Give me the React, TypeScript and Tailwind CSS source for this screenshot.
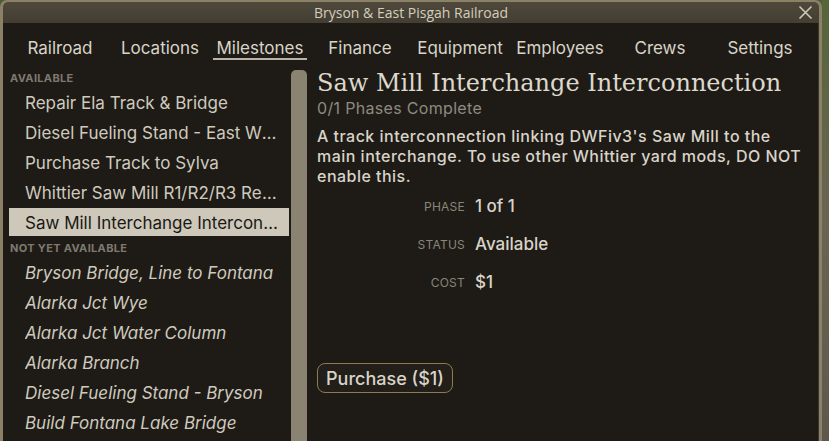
import React from 'react';

const tabs = ['Railroad', 'Locations', 'Milestones', 'Finance', 'Equipment', 'Employees', 'Crews', 'Settings'];

const available = [
    'Repair Ela Track & Bridge',
    'Diesel Fueling Stand - East Whittier',
    'Purchase Track to Sylva',
    'Whittier Saw Mill R1/R2/R3 Realignment',
    'Saw Mill Interchange Interconnection',
];

const notYet = [
    'Bryson Bridge, Line to Fontana',
    'Alarka Jct Wye',
    'Alarka Jct Water Column',
    'Alarka Branch',
    'Diesel Fueling Stand - Bryson',
    'Build Fontana Lake Bridge',
    'Fontana Branch',
];

const sans = "font-['Inter',sans-serif]";

function SectionHeader({ label }: { label: string }) {
    return (
        <div className="h-[20px] shrink-0 flex items-center pl-[1px] text-[11px] font-bold tracking-[0.03em] text-[#7e796f] uppercase">
            {label}
        </div>
    );
}

function Field({ label, value }: { label: string; value: string }) {
    return (
        <div className="h-[38px] flex items-center">
            <div className="w-[148px] text-right text-[12px] text-[#8a857a] uppercase tracking-[0.02em]">{label}</div>
            <div className="ml-[10px] text-[17px] font-medium text-[#d9d4c7]">{value}</div>
        </div>
    );
}

export default function App() {
    return (
        <div className={`w-[829px] h-[441px] flex items-start overflow-hidden bg-[#4f5a3a] ${sans}`}>
            {/* window */}
            <div className="w-[822px] h-[441px] shrink-0 flex flex-col bg-[#8b8166] rounded-t-[7px] pt-[2px] pl-[3px] pr-[3px] overflow-hidden">
                <div className="h-[21px] shrink-0 flex items-center relative bg-gradient-to-b from-[#4f493b] to-[#433e32] rounded-t-[5px]">
                    <div className="flex-1 text-center text-[14px] leading-[20px] text-[#d3cebf] font-['Open_Sans',sans-serif]">
                        Bryson &amp; East Pisgah Railroad
                    </div>
                    <svg className="absolute right-[6px] top-[3px]" width="15" height="15" viewBox="0 0 15 15">
                        <path d="M1.5 1.5 L13.5 13.5 M13.5 1.5 L1.5 13.5" stroke="#cfc8b4" strokeWidth="1.6" />
                    </svg>
                </div>

                <div className="flex-1 min-h-0 overflow-hidden bg-[#1e1b17] border-r border-[#3a352b] flex flex-col">
                    {/* tabs */}
                    <div className="h-[45px] shrink-0 flex pl-[7px] pt-[15px]">
                        {tabs.map((t) => (
                            <div key={t} className="w-[100px] flex flex-col items-center">
                                <div className="h-[22px] flex items-center text-[17px] text-[#d9d4c7]">{t}</div>
                                {t === 'Milestones' && <div className="mt-[-2px] w-[94px] h-[2px] bg-[#b9b3a6]" />}
                            </div>
                        ))}
                    </div>

                    <div className="flex-1 min-h-0 flex pl-[6px]">
                        {/* sidebar */}
                        <div className="w-[280px] shrink-0 flex flex-col">
                            <SectionHeader label="Available" />
                            {available.map((m, i) => {
                                const sel = i === available.length - 1;
                                return (
                                    <div
                                        key={m}
                                        className={`h-[28px] shrink-0 mb-[2px] flex items-center pt-[3px] pl-[16px] pr-[4px] text-[17px] ${sel ? 'bg-[#cdc8ba] text-[#1b1814]' : 'text-[#cfcabd]'}`}
                                    >
                                        <span className="truncate">{m}</span>
                                    </div>
                                );
                            })}
                            <SectionHeader label="Not yet available" />
                            {notYet.map((m) => (
                                <div key={m} className="h-[28px] shrink-0 mb-[2px] flex items-center pt-[3px] pl-[16px] pr-[4px] text-[17px] italic text-[#cfcabd]">
                                    <span className="truncate">{m}</span>
                                </div>
                            ))}
                        </div>

                        {/* scrollbar */}
                        <div className="ml-[2px] mt-[2px] w-[16px] shrink-0 bg-[#8a8371] rounded-t-[5px]" />

                        {/* detail */}
                        <div className="ml-[10px] flex-1 flex flex-col pr-[10px]">
                            <div className="font-['DejaVu_Serif',serif] text-[24px] leading-[30px] text-[#ddd8cb]">
                                Saw Mill Interchange Interconnection
                            </div>
                            <div className="text-[16px] leading-[20px] text-[#8f8a7f] tracking-[0.02em]">0/1 Phases Complete</div>
                            <p className="mt-[8px] text-[16px] leading-[20px] font-medium tracking-[0.03em] text-[#d9d4c7]">
                                A track interconnection linking DWFiv3's Saw Mill to the main interchange. To use other Whittier yard mods, DO NOT enable this.
                            </p>
                            <div className="mt-[2px] flex flex-col">
                                <Field label="Phase" value="1 of 1" />
                                <Field label="Status" value="Available" />
                                <Field label="Cost" value="$1" />
                            </div>
                            <div className="mt-[61px]">
                                <button className="h-[30px] px-[8px] rounded-[8px] border border-[#8c7a52] bg-[#221f1a] text-[18px] font-medium text-[#d9d4c7]">
                                    Purchase ($1)
                                </button>
                            </div>
                        </div>
                    </div>
                </div>
            </div>
            {/* scenery strip */}
            <div className="flex-1 h-full bg-gradient-to-b from-[#56653a] via-[#6b6453] to-[#5e584c]" />
        </div>
    );
}
